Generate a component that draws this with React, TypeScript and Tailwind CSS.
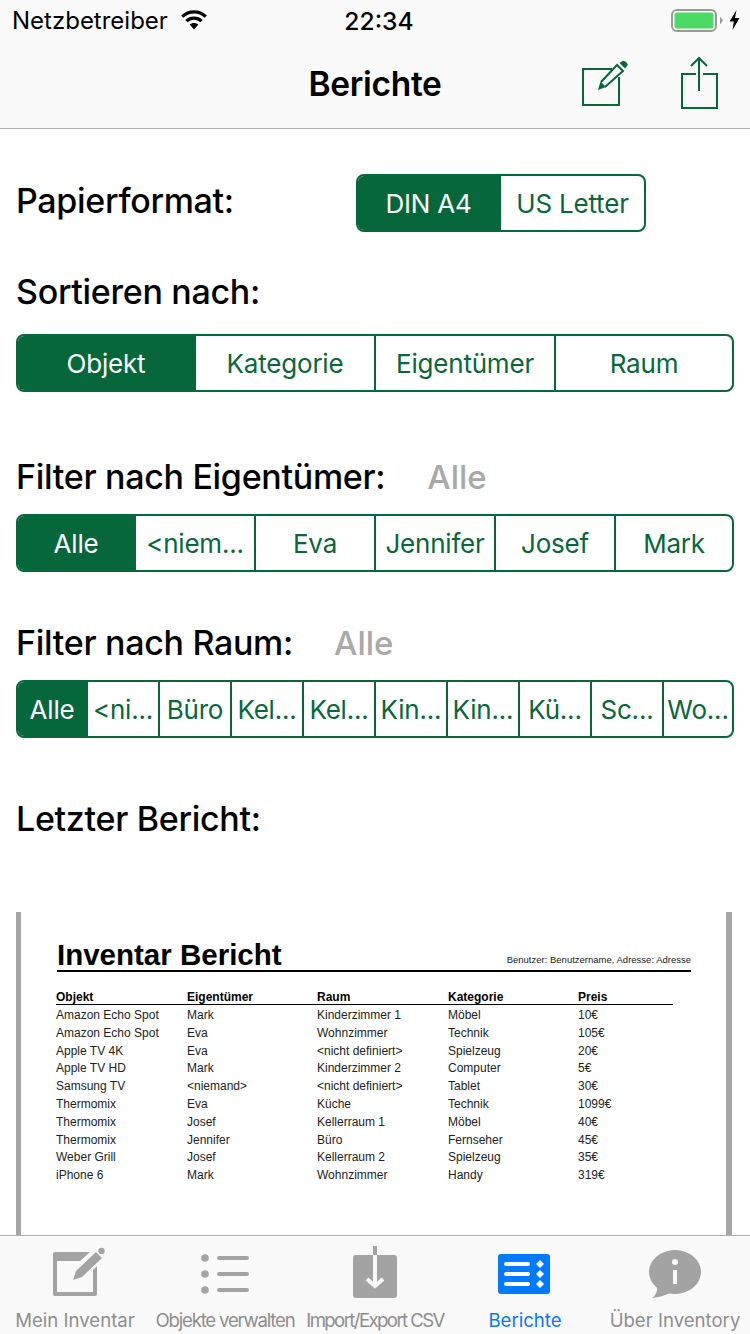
import React from "react";

const GREEN = "#06683a";
const GRAY = "#a3a3a3";

const rows = [
  ["Amazon Echo Spot", "Mark", "Kinderzimmer 1", "Möbel", "10€"],
  ["Amazon Echo Spot", "Eva", "Wohnzimmer", "Technik", "105€"],
  ["Apple TV 4K", "Eva", "<nicht definiert>", "Spielzeug", "20€"],
  ["Apple TV HD", "Mark", "Kinderzimmer 2", "Computer", "5€"],
  ["Samsung TV", "<niemand>", "<nicht definiert>", "Tablet", "30€"],
  ["Thermomix", "Eva", "Küche", "Technik", "1099€"],
  ["Thermomix", "Josef", "Kellerraum 1", "Möbel", "40€"],
  ["Thermomix", "Jennifer", "Büro", "Fernseher", "45€"],
  ["Weber Grill", "Josef", "Kellerraum 2", "Spielzeug", "35€"],
  ["iPhone 6", "Mark", "Wohnzimmer", "Handy", "319€"],
];

function Segmented({ items, className }: { items: string[]; className: string }) {
  return (
    <div className={`grid h-[58px] rounded-lg border-2 border-[#06683a] overflow-hidden ${className}`}>
      {items.map((item, i) => (
        <div
          key={i}
          className={`min-w-0 flex items-center justify-center text-[26px] tracking-[-0.2px] whitespace-nowrap ${
            i === 0 ? "bg-[#06683a] text-white" : "text-[#06683a]"
          } ${i < items.length - 1 ? "border-r-2 border-[#06683a]" : ""}`}
        >
          {item}
        </div>
      ))}
    </div>
  );
}

function Heading({ children }: { children: React.ReactNode }) {
  return <div className="text-[34px] leading-[40px] font-medium tracking-[-0.3px] text-black">{children}</div>;
}

function TabItem({ label, active, spacing, children }: { label: string; active?: boolean; spacing?: string; children: React.ReactNode }) {
  return (
    <div className="w-[150px] flex flex-col items-center">
      <div className="h-[64px] w-[150px]">{children}</div>
      <div className={`text-[18.6px] leading-[24px] whitespace-nowrap ${spacing ?? ""} ${active ? "text-[#007aff]" : "text-[#8e8e8e]"}`}>
        {label}
      </div>
    </div>
  );
}

export default function App() {
  return (
    <div className="w-[750px] h-[1334px] bg-white flex flex-col overflow-hidden font-['Inter',sans-serif]">
      {/* Statusleiste + Navigation */}
      <div className="h-[129px] shrink-0 bg-[#f9f9f9] border-b border-[#b2b2b2]">
        <div className="h-[40px] flex items-center justify-between pl-[12px] pr-[10px] relative">
          <div className="flex items-center gap-[12px]">
            <span className="text-[24px] text-black pt-[1px]">Netzbetreiber</span>
            <svg width="28" height="22" viewBox="0 0 28 22">
              <path d="M14 20.5 L9.6 15.6 C12 13.3 16 13.3 18.4 15.6 Z" fill="#000" />
              <path d="M6.4 12.2 C10.5 8.2 17.5 8.2 21.6 12.2" fill="none" stroke="#000" strokeWidth="3.2" />
              <path d="M2.2 7.6 C9 1.2 19 1.2 25.8 7.6" fill="none" stroke="#000" strokeWidth="3.2" />
            </svg>
          </div>
          <span className="absolute left-[8px] right-0 top-[3px] text-center text-[24.6px] font-medium text-black">22:34</span>
          <div className="flex items-center gap-[5px]">
            <svg width="54" height="24" viewBox="0 0 54 24">
              <rect x="2" y="2" width="44" height="21" rx="5" fill="none" stroke="#9a9a9a" strokeWidth="2" />
              <rect x="4.5" y="4.5" width="39" height="16" rx="2.5" fill="#4cd964" />
              <path d="M50 8.5 L53 12.5 L50 16.5 Z" fill="#9a9a9a" />
            </svg>
            <svg width="11" height="20" viewBox="0 0 11 20">
              <path d="M7.5 0 L0.5 11.5 H4.8 L3.5 20 L10.5 8 H6 Z" fill="#000" />
            </svg>
          </div>
        </div>
        <div className="h-[88px] relative flex items-center justify-center">
          <span className="text-[33.5px] font-semibold tracking-[-0.3px] text-black pt-[1px]">Berichte</span>
          <svg className="absolute left-[580px] top-[16px]" width="52" height="52" viewBox="0 0 52 52">
            <path d="M32 13 H3 V49 H39 V21" fill="none" stroke={GREEN} strokeWidth="2" />
            <path d="M21 26 L37 9 L43 15 L25 31" fill="none" stroke={GREEN} strokeWidth="2" />
            <path d="M18 34 L20.5 25.5 L26 31 Z" fill={GREEN} />
            <path d="M39.5 7 L42.5 5 C44.5 4 48.5 7.5 47.5 9.5 L45 12.5 Z" fill={GREEN} />
          </svg>
          <svg className="absolute left-[676px] top-[16px]" width="46" height="54" viewBox="0 0 46 54">
            <path d="M20 18 H6 V52 H41 V18 H27" fill="none" stroke={GREEN} strokeWidth="2" />
            <path d="M23 2 V35" fill="none" stroke={GREEN} strokeWidth="2" />
            <path d="M15 10 L23 2 L31 10" fill="none" stroke={GREEN} strokeWidth="2" />
          </svg>
        </div>
      </div>

      {/* Inhalt */}
      <div className="flex-1 min-h-0 overflow-hidden flex flex-col px-[16px]">
        <div className="mt-[45px] flex items-center justify-between pr-[88px]">
          <div className="pb-[5px]">
            <Heading>Papierformat:</Heading>
          </div>
          <Segmented items={["DIN A4", "US Letter"]} className="w-[290px] grid-cols-[143px_1fr]" />
        </div>
        <div className="mt-[40px]">
          <Heading>Sortieren nach:</Heading>
        </div>
        <Segmented items={["Objekt", "Kategorie", "Eigentümer", "Raum"]} className="mt-[22px] grid-cols-[178px_180px_180px_1fr]" />
        <div className="mt-[65px] flex items-center gap-[42px]">
          <Heading>Filter nach Eigentümer:</Heading>
          <span className="text-[33px] leading-[40px] font-medium text-[#a9a9a9]">Alle</span>
        </div>
        <Segmented
          items={["Alle", "<niem...", "Eva", "Jennifer", "Josef", "Mark"]}
          className="mt-[17px] grid-cols-[118px_120px_120px_120px_120px_1fr]"
        />
        <div className="mt-[51px] flex items-center gap-[41px]">
          <Heading>Filter nach Raum:</Heading>
          <span className="text-[33px] leading-[40px] font-medium text-[#a9a9a9]">Alle</span>
        </div>
        <Segmented
          items={["Alle", "<ni...", "Büro", "Kel...", "Kel...", "Kin...", "Kin...", "Kü...", "Sc...", "Wo..."]}
          className="mt-[17px] grid-cols-[70px_72px_72px_72px_72px_72px_72px_72px_72px_1fr]"
        />
        <div className="mt-[61px]">
          <Heading>Letzter Bericht:</Heading>
        </div>

        {/* PDF Vorschau */}
        <div className="mt-[73px] w-[716px] flex-1 border-l-[5px] border-r-[6px] border-[#a6a6a6] pl-[35px] pr-[35px] pt-[28px] font-['Liberation_Sans',sans-serif] text-black">
          <div className="flex items-end justify-between h-[30px] pl-[1px]">
            <span className="text-[29.5px] leading-[30px] font-bold">Inventar Bericht</span>
            <span className="text-[9.5px] leading-[14px] text-[#222] pb-[3px]">Benutzer: Benutzername, Adresse: Adresse</span>
          </div>
          <div className="h-[2px] bg-black ml-[1px]" />
          <div className="mt-[18px] w-[617px] border-b border-black grid grid-cols-[131px_130px_131px_130px_95px] text-[12px] leading-[14px] font-bold">
            <span>Objekt</span>
            <span>Eigentümer</span>
            <span>Raum</span>
            <span>Kategorie</span>
            <span>Preis</span>
          </div>
          <div className="mt-[2px] w-[617px] text-[12px] text-[#222]">
            {rows.map((r, i) => (
              <div key={i} className="h-[17.8px] leading-[17.8px] grid grid-cols-[131px_130px_131px_130px_95px]">
                {r.map((c, j) => (
                  <span key={j} className="whitespace-nowrap">{c}</span>
                ))}
              </div>
            ))}
          </div>
        </div>
      </div>

      {/* Tab Bar */}
      <div className="h-[99px] shrink-0 bg-[#f9f9f9] border-t border-[#b2b2b2] flex pt-[8px]">
        <TabItem label="Mein Inventar">
          <svg width="150" height="64" viewBox="0 0 150 64">
            <path
              d="M55 8 H90 L80 17 H57 V48 H93 V26 L97 22 V50 Q97 52 95 52 H55 Q53 52 53 50 V10 Q53 8 55 8 Z"
              fill={GRAY}
            />
            <path d="M73 36 L76 27 L96 8 L102 14 L82 33 Z" fill={GRAY} />
            <circle cx="101.5" cy="7" r="3.2" fill={GRAY} />
          </svg>
        </TabItem>
        <TabItem label="Objekte verwalten" spacing="tracking-[-1.2px]">
          <svg width="150" height="64" viewBox="0 0 150 64">
            {[14, 30, 46].map((y) => (
              <g key={y}>
                <circle cx="55" cy={y} r="3.8" fill={GRAY} />
                <rect x="67" y={y - 2} width="32" height="4" rx="2" fill={GRAY} />
              </g>
            ))}
          </svg>
        </TabItem>
        <TabItem label="Import/Export CSV" spacing="tracking-[-1.6px]">
          <svg width="150" height="64" viewBox="0 0 150 64">
            <rect x="53" y="11" width="44" height="43" rx="3" fill={GRAY} />
            <rect x="73" y="2" width="4" height="9" fill={GRAY} />
            <path d="M75 11 V40" fill="none" stroke="#f9f9f9" strokeWidth="4" />
            <path d="M67 35 L75 42 L83 35" fill="none" stroke="#f9f9f9" strokeWidth="4" />
          </svg>
        </TabItem>
        <TabItem label="Berichte" active>
          <svg width="150" height="64" viewBox="0 0 150 64">
            <rect x="48" y="10" width="52" height="40" rx="3" fill="#007aff" />
            {[20, 30, 40].map((y) => (
              <g key={y}>
                <rect x="54" y={y - 2} width="26" height="4" rx="2" fill="#fff" />
                <path d={`M90 ${y - 4} L94 ${y} L90 ${y + 4} L86 ${y} Z`} fill="#fff" />
              </g>
            ))}
          </svg>
        </TabItem>
        <TabItem label="Über Inventory">
          <svg width="150" height="64" viewBox="0 0 150 64">
            <ellipse cx="75" cy="28" rx="26" ry="22" fill={GRAY} />
            <path d="M57 42 Q58 50 52 54 Q62 53 70 49 Z" fill={GRAY} />
            <circle cx="75" cy="18" r="3" fill="#f9f9f9" />
            <rect x="73" y="26" width="4" height="14" fill="#f9f9f9" />
          </svg>
        </TabItem>
      </div>
    </div>
  );
}
